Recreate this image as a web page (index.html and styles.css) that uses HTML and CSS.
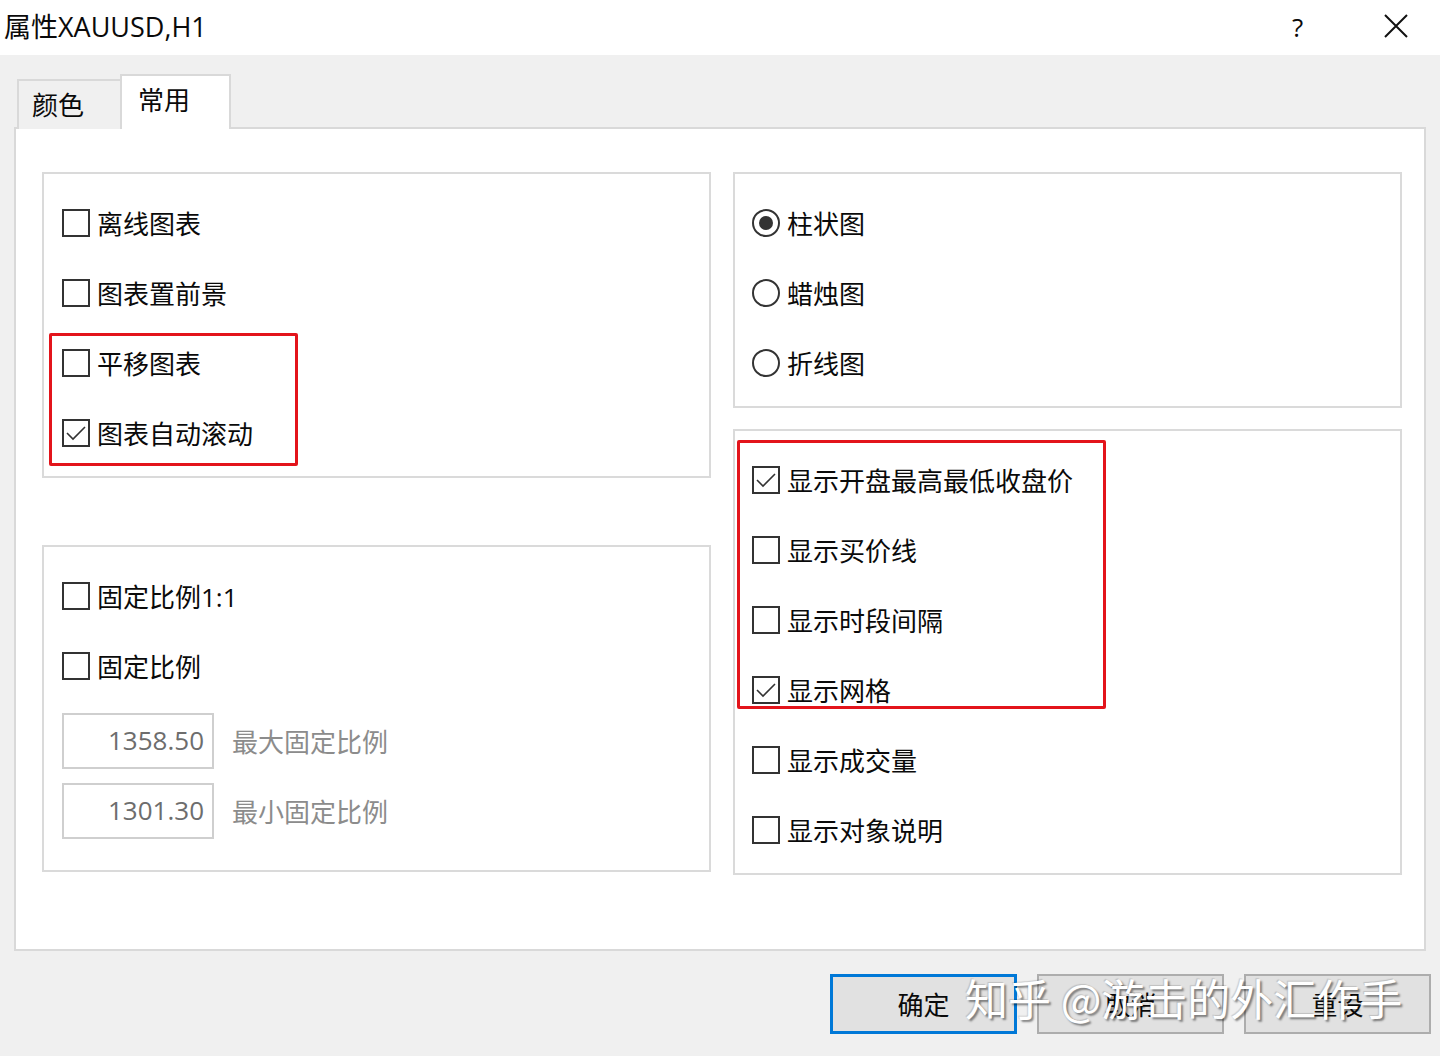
FILE: index.html
```html
<!DOCTYPE html>
<html lang="zh-CN">
<head>
<meta charset="utf-8">
<title>属性XAUUSD,H1</title>
<link rel="stylesheet" href="styles.css">
</head>
<body>
<div class="titlebar">
  <span class="title">属性XAUUSD,H1</span>
  <span class="help">?</span>
  <span class="close"><svg width="26" height="26" viewBox="0 0 26 26"><path d="M2 2 L24 24 M24 2 L2 24" stroke="#111" stroke-width="2" fill="none"/></svg></span>
</div>
<div class="dialog">
  <div class="tabs">
    <div class="tab">颜色</div>
    <div class="tab active">常用</div>
  </div>
  <div class="panel">
    <div class="col">
      <div class="group g-left1">
        <div class="row"><span class="cb"></span><span class="lbl">离线图表</span></div>
        <div class="row"><span class="cb"></span><span class="lbl">图表置前景</span></div>
        <div class="row"><span class="cb"></span><span class="lbl">平移图表</span></div>
        <div class="row"><span class="cb"><svg width="24" height="24" viewBox="0 0 24 24"><path d="M3 12 L9 18 L21 6" stroke="#333" stroke-width="1.6" fill="none"/></svg></span><span class="lbl">图表自动滚动</span></div>
        <div class="mark mark-left"></div>
      </div>
      <div class="group g-left2">
        <div class="row"><span class="cb"></span><span class="lbl">固定比例1:1</span></div>
        <div class="row"><span class="cb"></span><span class="lbl">固定比例</span></div>
        <div class="field-row first"><span class="input">1358.50</span><span class="flabel">最大固定比例</span></div>
        <div class="field-row"><span class="input">1301.30</span><span class="flabel">最小固定比例</span></div>
      </div>
    </div>
    <div class="col col-right">
      <div class="group g-right1">
        <div class="row"><span class="rb on"></span><span class="lbl">柱状图</span></div>
        <div class="row"><span class="rb"></span><span class="lbl">蜡烛图</span></div>
        <div class="row"><span class="rb"></span><span class="lbl">折线图</span></div>
      </div>
      <div class="group g-right2">
        <div class="row"><span class="cb"><svg width="24" height="24" viewBox="0 0 24 24"><path d="M3 12 L9 18 L21 6" stroke="#333" stroke-width="1.6" fill="none"/></svg></span><span class="lbl">显示开盘最高最低收盘价</span></div>
        <div class="row"><span class="cb"></span><span class="lbl">显示买价线</span></div>
        <div class="row"><span class="cb"></span><span class="lbl">显示时段间隔</span></div>
        <div class="row"><span class="cb"><svg width="24" height="24" viewBox="0 0 24 24"><path d="M3 12 L9 18 L21 6" stroke="#333" stroke-width="1.6" fill="none"/></svg></span><span class="lbl">显示网格</span></div>
        <div class="row"><span class="cb"></span><span class="lbl">显示成交量</span></div>
        <div class="row"><span class="cb"></span><span class="lbl">显示对象说明</span></div>
        <div class="mark mark-right"></div>
      </div>
    </div>
  </div>
  <div class="buttons">
    <div class="btn default">确定</div>
    <div class="btn">取消</div>
    <div class="btn">重设</div>
  </div>
  <div class="watermark">知乎 @游击的外汇作手</div>
</div>
</body>
</html>
```
FILE: styles.css
```css
* { box-sizing: border-box; }
html, body {
  margin: 0;
  padding: 0;
}
body {
  width: 1440px;
  height: 1056px;
  overflow: hidden;
  background: #f0f0f0;
  font-family: "Open Sans", "Noto Sans CJK SC", sans-serif;
  font-size: 26px;
  color: #0a0a0a;
  position: relative;
}
.titlebar {
  height: 55px;
  background: #fff;
  display: flex;
  align-items: center;
  padding-left: 4px;
}
.title {
  flex: 1;
  font-size: 27px;
  margin-top: -4px;
}
.help {
  width: 20px;
  font-size: 26px;
  margin-right: 71px;
  margin-top: -2px;
}
.close {
  width: 26px;
  height: 26px;
  margin-right: 31px;
  margin-top: -4px;
  display: flex;
}
.dialog {
  padding: 19px 14px 0 14px;
}
.tabs {
  display: flex;
  align-items: flex-end;
  padding-left: 3px;
  height: 55px;
  position: relative;
  z-index: 2;
  margin-bottom: -2px;
}
.tab {
  height: 50px;
  padding: 0 13px;
  width: 103px;
  background: #f0f0f0;
  border: 2px solid #d9d9d9;
  border-bottom: none;
  border-right: none;
  display: flex;
  align-items: center;
  line-height: 1;
}
.tab.active {
  height: 55px;
  width: 111px;
  background: #fff;
  padding: 0 16px;
  padding-bottom: 6px;
  border-right: 2px solid #d9d9d9;
}
.panel {
  background: #fff;
  border: 2px solid #d9d9d9;
  height: 824px;
  padding: 43px 22px 0 26px;
  display: grid;
  grid-template-columns: 669px 669px;
  column-gap: 22px;
  align-items: start;
}
.col {
  display: flex;
  flex-direction: column;
  gap: 67px;
}
.col-right { gap: 21px; }
.group {
  border: 2px solid #dadada;
  background: #fff;
  padding: 14px 0 0 18px;
  position: relative;
}
.col-right .group { padding-left: 17px; }
.g-left1 { height: 306px; }
.g-left2 { height: 327px; }
.g-right1 { height: 236px; }
.g-right2 { height: 446px; }
.row {
  height: 70px;
  display: flex;
  align-items: center;
}
.cb {
  width: 28px;
  height: 28px;
  border: 2px solid #333;
  background: #fff;
  flex: none;
  display: flex;
  align-items: center;
  justify-content: center;
}
.rb {
  width: 28px;
  height: 28px;
  border: 2px solid #333;
  border-radius: 50%;
  flex: none;
  display: flex;
  align-items: center;
  justify-content: center;
}
.rb.on::after {
  content: "";
  width: 14px;
  height: 14px;
  border-radius: 50%;
  background: #333;
}
.lbl {
  margin-left: 7px;
  line-height: 1;
  margin-top: 2px;
}
.field-row {
  display: flex;
  align-items: center;
  margin-top: 14px;
}
.field-row.first { margin-top: 12px; }
.input {
  width: 152px;
  height: 56px;
  border: 2px solid #cfcfcf;
  background: #fff;
  color: #6d6d6d;
  text-align: right;
  padding-right: 8px;
  line-height: 50px;
  flex: none;
}
.flabel {
  margin-left: 18px;
  color: #8c8c8c;
}
.mark {
  position: absolute;
  border: 3px solid #e3141b;
  border-radius: 2px;
  pointer-events: none;
}
.mark-left {
  left: 5px;
  top: 159px;
  width: 249px;
  height: 133px;
}
.mark-right {
  left: 2px;
  top: 9px;
  width: 369px;
  height: 269px;
}
.buttons {
  display: flex;
  justify-content: flex-end;
  gap: 20px;
  margin-top: 23px;
  margin-right: -5px;
}
.btn {
  width: 187px;
  height: 60px;
  background: #e1e1e1;
  border: 2px solid #adadad;
  display: flex;
  align-items: center;
  justify-content: center;
  line-height: 1;
  padding-top: 2px;
}
.btn.default {
  border: 3px solid #0078d7;
}
.watermark {
  position: absolute;
  left: 965px;
  top: 966px;
  font-family: "Noto Sans CJK SC", sans-serif;
  font-size: 43px;
  color: #fff;
  text-shadow: 2px 2px 2px rgba(0,0,0,0.45), -1px -1px 1px rgba(0,0,0,0.15);
  white-space: nowrap;
}
```
